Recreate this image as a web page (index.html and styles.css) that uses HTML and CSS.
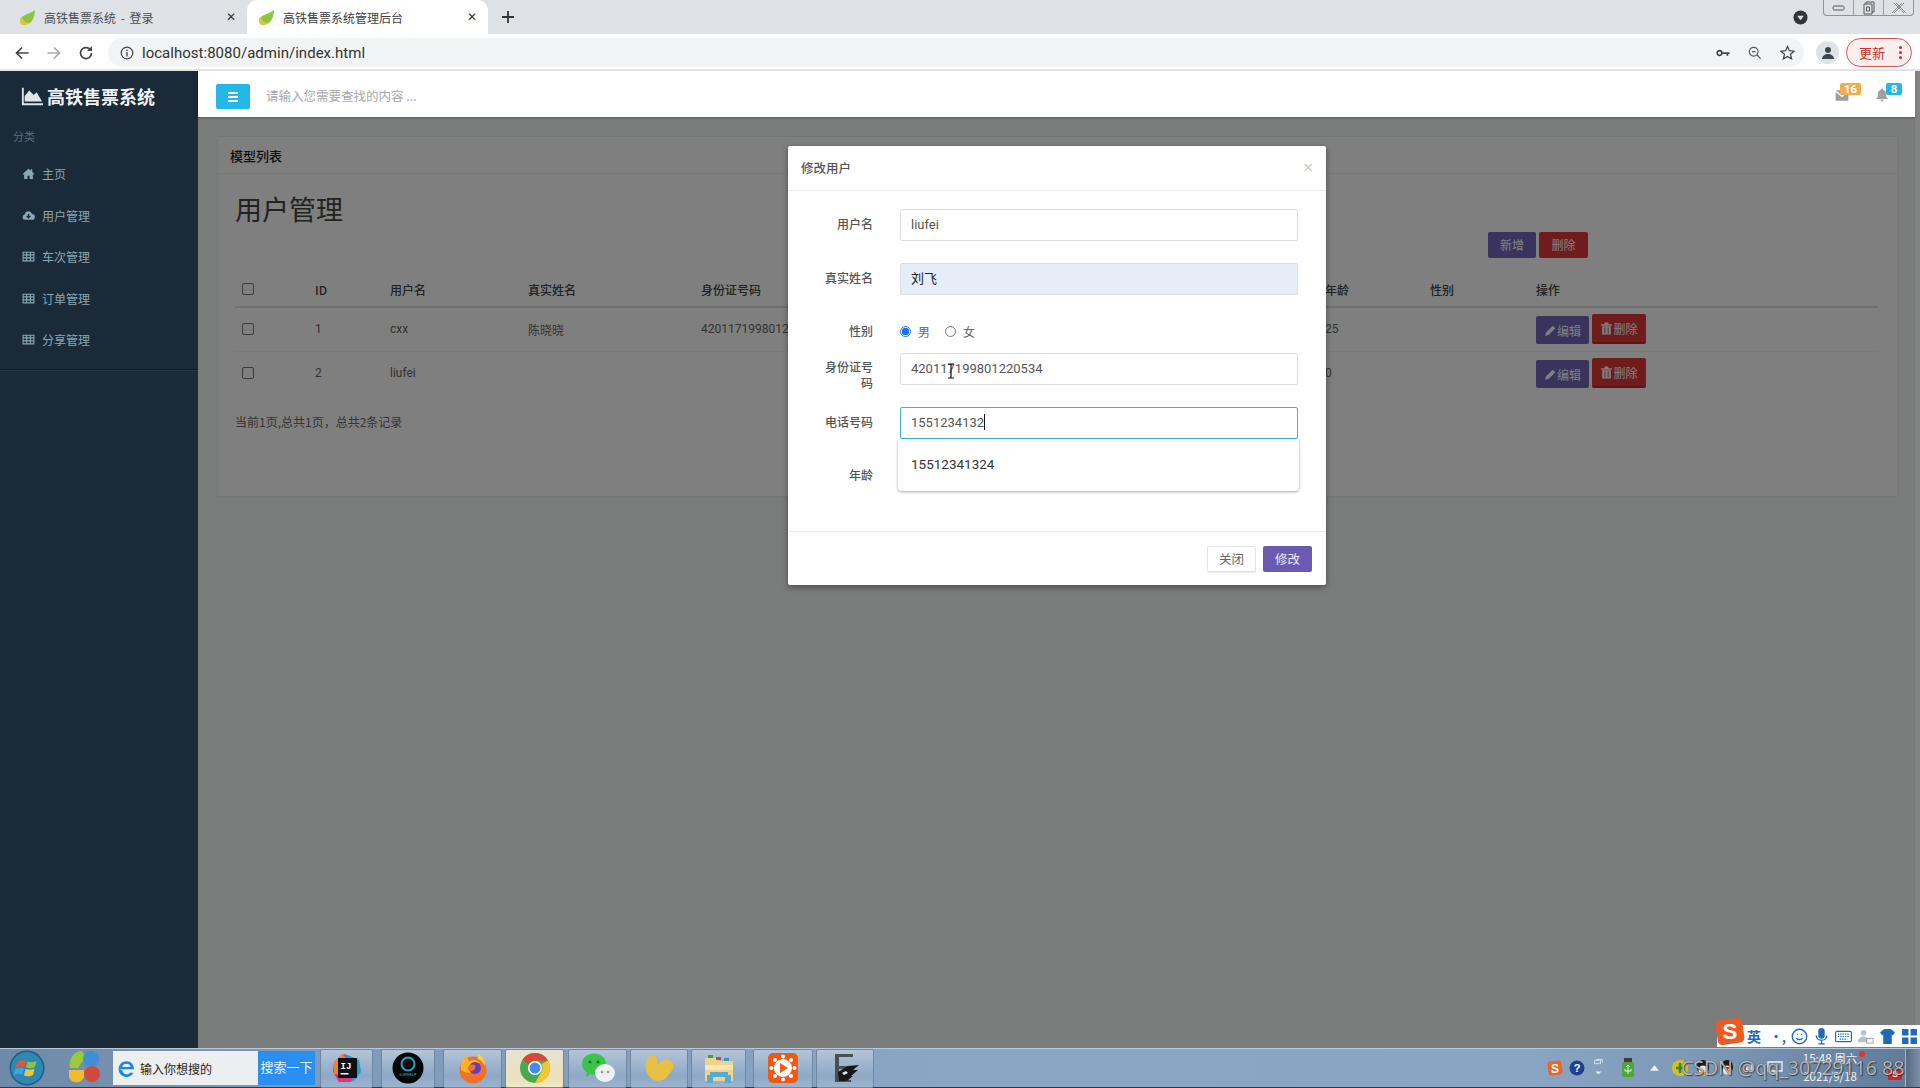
FILE: index.html
```html
<!DOCTYPE html>
<html lang="zh-CN">
<head>
<meta charset="utf-8">
<title>高铁售票系统管理后台</title>
<link rel="stylesheet" href="styles.css">
</head>
<body>
<svg class="defs" aria-hidden="true">
  <symbol id="i-leaf" viewBox="0 0 16 16"><path fill="#8cc63f" d="M15 1C15 9 11 15 5 15 2 15 1 13 1 11 1 6 8 6 15 1z"/><path fill="#e3c53a" d="M1 11c0 2 1 4 4 4 2 0 4-1 5-2C7 13 4 12 3 8 2 9 1 10 1 11z"/></symbol>
  <symbol id="i-home" viewBox="0 0 24 24"><path fill="currentColor" d="M12 3 1 13l1.500 1.500L4 13.300V22h6v-6h4v6h6v-8.700l1.500 1.200L23 13l-4-3.600V4h-3v2.700z"/></symbol>
  <symbol id="i-cloud" viewBox="0 0 24 24"><path fill="currentColor" d="M6 20a5 5 0 0 1-1-9.900A7 7 0 0 1 18.500 9 5.500 5.500 0 0 1 18 20z"/><path fill="#1a2a38" d="M10.500 9h3v4h3L12 18l-4.500-5h3z"/></symbol>
  <symbol id="i-table" viewBox="0 0 24 24"><path fill="none" stroke="currentColor" stroke-width="2" d="M2 4h20v16H2zM2 9h20M2 14.500h20M8.500 4v16M15.500 4v16"/></symbol>
  <symbol id="i-area" viewBox="0 0 24 24"><path fill="currentColor" d="M1 3h2v17h21v2H1z"/><path fill="currentColor" d="M4 18V12l5-6 5 5 3-3 6 10z"/></symbol>
  <symbol id="i-mail" viewBox="0 0 24 24"><path fill="currentColor" d="M1 4h22L12 13zM1 7v15h22V7L12 16z"/></symbol>
  <symbol id="i-bell" viewBox="0 0 24 24"><path fill="currentColor" d="M12 1a2 2 0 0 1 2 2c4 1 5 4 5 8 0 4 1 5 3 7v1H2v-1c2-2 3-3 3-7 0-4 1-7 5-8a2 2 0 0 1 2-2zM9 20h6a3 3 0 0 1-6 0z"/></symbol>
  <symbol id="i-pencil" viewBox="0 0 24 24"><path fill="currentColor" d="M2 22l2-7L16 3l5 5L9 20z"/></symbol>
  <symbol id="i-trash" viewBox="0 0 24 24"><path fill="currentColor" d="M9 1h6l1 3h6v3H2V4h6zM4 8h16v15H4z"/><path stroke="#a52d2d" stroke-width="1.500" d="M9 10v11M15 10v11"/></symbol>
</svg>

<div class="screen">
  <div class="tabstrip">
    <div class="tab">
      <svg class="favicon"><use href="#i-leaf"/></svg>
      <span class="tab-title">高铁售票系统 - 登录</span>
      <span class="tab-x">✕</span>
    </div>
    <div class="tab tab-active">
      <svg class="favicon"><use href="#i-leaf"/></svg>
      <span class="tab-title">高铁售票系统管理后台</span>
      <span class="tab-x">✕</span>
    </div>
    <svg class="tab-plus" viewBox="0 0 14 14"><path d="M7 1v12M1 7h12" stroke="#333" stroke-width="1.800"/></svg>
    <svg class="tab-menu" viewBox="0 0 16 16"><circle cx="8" cy="8" r="7.500" fill="#30343a"/><path d="M4.500 6h7L8 11z" fill="#dee1e6"/></svg>
    <div class="winctl">
      <span class="winbtn"><svg viewBox="0 0 14 10" width="14" height="10"><rect x="1" y="3" width="11" height="4" rx="1.500" fill="none" stroke="#555"/></svg></span>
      <span class="winbtn"><svg viewBox="0 0 14 14" width="14" height="14"><path d="M4 3V1h8v10h-2M2 3h8v10H2zM4.500 6h3v4h-3z" fill="none" stroke="#555"/></svg></span>
      <span class="winbtn winbtn-x"><svg viewBox="0 0 14 12" width="14" height="12"><path d="M2 1l10 10M12 1L2 11M4 1l10 10M10 1L0 11" fill="none" stroke="#777" stroke-width=".8"/></svg></span>
    </div>
  </div>

  <div class="toolbar">
    <svg class="nav-ico" viewBox="0 0 16 16"><path d="M14.500 8H2.500M8 2.500 2.500 8 8 13.500" fill="none" stroke="#444" stroke-width="1.700"/></svg>
    <svg class="nav-ico nav-fwd" viewBox="0 0 16 16"><path d="M1.500 8h12M8 2.500 13.500 8 8 13.500" fill="none" stroke="#a8a8a8" stroke-width="1.700"/></svg>
    <svg class="nav-ico nav-rel" viewBox="0 0 16 16"><path d="M13.500 8A5.500 5.500 0 1 1 11.500 3.800" fill="none" stroke="#444" stroke-width="1.700"/><path d="M14 1v5H9z" fill="#444"/></svg>
    <div class="omnibox">
      <svg class="info-ico" viewBox="0 0 14 14"><circle cx="7" cy="7" r="5.800" fill="none" stroke="#444" stroke-width="1.200"/><path d="M7 6v4.500M7 3.500v1.500" stroke="#444" stroke-width="1.300"/></svg>
      <span class="url">localhost:8080/admin/index.html</span>
      <svg class="omni-ico omni-key" viewBox="0 0 16 10"><circle cx="4" cy="5" r="2.700" fill="none" stroke="#444" stroke-width="1.800"/><path d="M7 4h8.500v2H14v2h-2V6H7z" fill="#444"/></svg>
      <svg class="omni-ico" viewBox="0 0 16 16"><circle cx="6.500" cy="6.500" r="5" fill="none" stroke="#555" stroke-width="1.300"/><path d="M4.500 6.500h4M10 10l4.500 4.500" stroke="#555" stroke-width="1.300"/></svg>
      <svg class="omni-ico omni-star" viewBox="0 0 16 16"><path d="M8 1.500l2 4.600 5 .5-3.800 3.300 1.200 4.900L8 12.200l-4.400 2.600 1.200-4.900L1 6.600l5-.5z" fill="none" stroke="#444" stroke-width="1.300"/></svg>
    </div>
    <span class="avatar"><svg viewBox="0 0 16 16" width="16" height="16"><circle cx="8" cy="5" r="3" fill="#3c4650"/><path d="M2 14c0-3 3-5 6-5s6 2 6 5z" fill="#3c4650"/></svg></span>
    <span class="update"><span class="update-label">更新</span><span class="update-dots"><i></i><i></i><i></i></span></span>
  </div>

  <div class="app">
    <aside class="sidebar">
      <div class="brand"><svg class="brand-ico"><use href="#i-area"/></svg><span>高铁售票系统</span></div>
      <div class="side-cat">分类</div>
      <nav class="side-nav">
        <a class="side-item"><svg class="side-ico"><use href="#i-home"/></svg><span>主页</span></a>
        <a class="side-item"><svg class="side-ico"><use href="#i-cloud"/></svg><span>用户管理</span></a>
        <a class="side-item"><svg class="side-ico"><use href="#i-table"/></svg><span>车次管理</span></a>
        <a class="side-item"><svg class="side-ico"><use href="#i-table"/></svg><span>订单管理</span></a>
        <a class="side-item"><svg class="side-ico"><use href="#i-table"/></svg><span>分享管理</span></a>
      </nav>
    </aside>

    <div class="content">
      <header class="topbar">
        <button class="toggle"><svg viewBox="0 0 12 12" width="12" height="12"><path d="M1 2h10M1 6h10M1 10h10" stroke="#fff" stroke-width="2"/></svg></button>
        <span class="search-ph">请输入您需要查找的内容 ...</span>
        <div class="top-icons">
          <span class="top-icon"><svg class="top-svg"><use href="#i-mail"/></svg><b class="badge badge-o">16</b></span>
          <span class="top-icon top-bell"><svg class="top-svg"><use href="#i-bell"/></svg><b class="badge badge-b">8</b></span>
        </div>
      </header>

      <main class="main">
        <section class="card">
          <div class="card-head">模型列表</div>
          <div class="card-body">
            <h1 class="page-title">用户管理</h1>
            <div class="tools">
              <button class="btn btn-purple">新增</button>
              <button class="btn btn-red">删除</button>
            </div>
            <table class="grid">
              <colgroup><col class="c1"><col class="c2"><col class="c3"><col class="c4"><col class="c5"><col class="c6"><col class="c7"><col class="c8"><col class="c9"></colgroup>
              <thead>
                <tr><th><span class="check"></span></th><th>ID</th><th>用户名</th><th>真实姓名</th><th>身份证号码</th><th>电话号码</th><th>年龄</th><th>性别</th><th>操作</th></tr>
              </thead>
              <tbody>
                <tr><td><span class="check"></span></td><td>1</td><td>cxx</td><td>陈晓晓</td><td>420117199801220534</td><td></td><td>25</td><td></td>
                  <td><div class="ops"><button class="op op-edit"><svg class="op-ico"><use href="#i-pencil"/></svg>编辑</button><button class="op op-del"><svg class="op-ico"><use href="#i-trash"/></svg>删除</button></div></td></tr>
                <tr><td><span class="check"></span></td><td>2</td><td>liufei</td><td></td><td></td><td></td><td>0</td><td></td>
                  <td><div class="ops"><button class="op op-edit"><svg class="op-ico"><use href="#i-pencil"/></svg>编辑</button><button class="op op-del"><svg class="op-ico"><use href="#i-trash"/></svg>删除</button></div></td></tr>
              </tbody>
            </table>
            <p class="pager">当前1页,总共1页，总共2条记录</p>
          </div>
        </section>

        <div class="backdrop"></div>

        <div class="modal">
          <div class="modal-head"><span class="modal-title">修改用户</span><span class="modal-x">×</span></div>
          <form class="modal-body">
            <div class="row row-a"><label>用户名</label><div class="field">liufei</div></div>
            <div class="row row-b"><label>真实姓名</label><div class="field field-fill">刘飞</div></div>
            <div class="row row-c"><label>性别</label>
              <div class="radios"><span class="radio radio-on"></span><span class="radio-text">男</span><span class="radio"></span><span class="radio-text">女</span></div>
            </div>
            <div class="row row-d"><label class="label-wrap">身份证号码</label><div class="field">420117199801220534<svg class="ibeam" viewBox="0 0 8 16"><path d="M1 1h6M4 1v14M1 15h6" stroke="#111" stroke-width="1.200" fill="none"/></svg></div></div>
            <div class="row row-e"><label>电话号码</label><div class="field field-focus">1551234132<i class="caret"></i></div></div>
            <div class="row row-f"><label>年龄</label></div>
            <div class="suggest">15512341324</div>
          </form>
          <div class="modal-foot">
            <button class="mbtn mbtn-close">关闭</button>
            <button class="mbtn mbtn-ok">修改</button>
          </div>
        </div>
      </main>
    </div>
    <div class="scrollbar"></div>
  </div>

  <footer class="taskbar">
    <svg class="orb" viewBox="0 0 36 36">
      <circle cx="18" cy="18" r="17.500" fill="#1d5d86"/><circle cx="18" cy="18" r="16" fill="#2e88b5"/>
      <path d="M8 12c3-2 6-2 9-1l-1.500 6c-3-1-6-1-9 1z" fill="#e8552c"/><path d="M18.500 11.500c3 1 6 1 9-.5l-1.500 6c-3 1.500-6 1.500-9 .5z" fill="#8cc63f"/>
      <path d="M6 19.500c3-2 6-2 9-1l-1.500 6c-3-1-6-1-9 1z" fill="#3aa4e0"/><path d="M16.500 19c3 1 6 1 9-.5L24 25c-3 1.500-6 1.500-9 .5z" fill="#f8c13a"/>
    </svg>
    <svg class="apps" viewBox="0 0 32 36">
      <path d="M13 1a7 7 0 0 1 3 8c-2 4-5 6-6 9H2C0 10 6 1 13 1z" fill="#9ac93a"/><circle cx="23" cy="9" r="8" fill="#3f8fd6"/><circle cx="24" cy="24" r="8" fill="#d2483c"/><path d="M1 20h15v7a8 8 0 0 1-15 0z" fill="#f0bb2c"/>
    </svg>
    <div class="websearch">
      <div class="ws-input">
        <svg class="ie" viewBox="0 0 20 20"><path d="M3 10.800h14c.4-4.500-2.800-7.800-7-7.800-4.300 0-7.500 3.200-7.500 7.500S5.700 18 10 18c3 0 5.500-1.500 6.700-4h-3.600c-.7 1-1.800 1.500-3.100 1.500-2 0-3.600-1.500-4-3.700zM6 8.500C6.400 6.500 8 5.400 10 5.400s3.500 1.100 3.900 3.100z" fill="#1b87e0" fill-rule="evenodd"/></svg>
        <span>输入你想搜的</span>
      </div>
      <div class="ws-btn">搜索一下</div>
    </div>
    <div class="tasks">
      <div class="task t-idea"><svg viewBox="0 0 32 32" class="task-svg"><path d="M3 10 13 2l10 4 7 12-10 12H8L2 20z" fill="#e5317e"/><path d="M14 2l14 6 2 12-8 10z" fill="#1a9fe0"/><path d="M3 10l8-8 6 6-8 14H3z" fill="#f58220"/><rect x="7" y="6" width="19" height="20" fill="#111"/><text x="9.500" y="16.500" class="ij">IJ</text><rect x="9.500" y="21" width="8" height="1.500" fill="#fff"/></svg></div>
      <div class="task t-sup"><svg viewBox="0 0 32 32" class="task-svg"><circle cx="16" cy="16" r="15.500" fill="#060606"/><circle cx="16" cy="12" r="6.500" fill="none" stroke="#22a6c9" stroke-width="2"/><text x="16" y="24" class="sup">SUPHELP</text></svg></div>
      <div class="task t-fox"><svg viewBox="0 0 32 32" class="task-svg"><circle cx="16" cy="18" r="13.500" fill="#f4702a"/><path d="M4 18C3 10 7 5 11 3c-1 3 0 5 1 6 4-2 9-1 11 2-3-1-7 0-8 3 0 3 3 5 6 4-4 5-13 3-17 0z" fill="#ffb224"/><circle cx="18" cy="16" r="6" fill="#6a3bc0"/><path d="M11 15c2-3 5-3 7-2 1 3 0 5-3 6-3 0-5-2-4-4z" fill="#f4702a"/><path d="M22 2c3 3 6 7 6 13-1-4-4-7-7-8 0-2 0-4 1-5z" fill="#ffd23a"/></svg></div>
      <div class="task t-chrome"><svg viewBox="0 0 32 32" class="task-svg"><circle cx="16" cy="16" r="15" fill="#4aa84f"/><path d="M16 1a15 15 0 0 1 13 7.500H16a7.500 7.500 0 0 0-6.500 3.800L3.500 7.500A15 15 0 0 1 16 1z" fill="#dc4537"/><path d="M29 8.500A15 15 0 0 1 16 31l6.500-11.300A7.500 7.500 0 0 0 22.500 12z" fill="#f7c62f"/><circle cx="16" cy="16" r="7" fill="#fff"/><circle cx="16" cy="16" r="5.500" fill="#4688f0"/></svg></div>
      <div class="task t-wx"><svg viewBox="0 0 36 32" class="task-svg task-wide"><ellipse cx="14" cy="12" rx="12" ry="10.500" fill="#3bc44a"/><path d="M7 19l-1 6 6-4z" fill="#3bc44a"/><circle cx="10" cy="10" r="1.500" fill="#17702a"/><circle cx="18" cy="10" r="1.500" fill="#17702a"/><ellipse cx="25" cy="21" rx="10" ry="9" fill="#eef1f2"/><circle cx="22" cy="20" r="1.300" fill="#999"/><circle cx="28" cy="20" r="1.300" fill="#999"/></svg></div>
      <div class="task t-duck"><svg viewBox="0 0 36 32" class="task-svg task-wide"><path d="M5 18C3 8 9 2 14 4c2 1 3 6 2 10 3-5 9-8 14-5 3 2 3 7 0 11-4 5-7 9-13 9-6 0-10-5-12-11z" fill="#e8c044"/></svg></div>
      <div class="task t-folder"><svg viewBox="0 0 32 32" class="task-svg"><path d="M2 6h12l2 3h14v20H2z" fill="#ecd58a"/><rect x="5" y="3" width="5" height="3" fill="#3fa14a"/><rect x="13" y="5" width="5" height="3" fill="#c84a3a"/><rect x="21" y="6" width="5" height="3" fill="#3c8fd0"/><path d="M2 13h28v5H2z" fill="#f6e8b6"/><path d="M7 20h18v3h3v8h-6v-6H10v6H4v-8h3z" fill="#57a9d8"/></svg></div>
      <div class="task t-video"><svg viewBox="0 0 32 32" class="task-svg"><rect x="1" y="1" width="30" height="30" rx="5" fill="#ee5a15"/><circle cx="16" cy="16" r="9" fill="#fff"/><g fill="#fff"><circle cx="16" cy="4.500" r="2"/><circle cx="16" cy="27.500" r="2"/><circle cx="4.500" cy="16" r="2"/><circle cx="27.500" cy="16" r="2"/><circle cx="8" cy="8" r="2"/><circle cx="24" cy="8" r="2"/><circle cx="8" cy="24" r="2"/><circle cx="24" cy="24" r="2"/></g><path d="M13 11l8 5-8 5z" fill="#ee5a15"/></svg></div>
      <div class="task t-ed"><svg viewBox="0 0 32 32" class="task-svg"><path d="M6 2h18v3H10v9h10v3H10v11h12v2H6z" fill="#4a4f54"/><path d="M9 20l10-6 11-1-6 5 5 0-7 6 2 0-6 5H10z" fill="#181818"/><path d="M13 21l4-2 2 2-4 2z" fill="#e8e8e8"/></svg></div>
    </div>
    <div class="tray">
      <svg class="tray-i tray-s" viewBox="0 0 16 16"><rect x="1" y="1" width="14" height="14" rx="3" fill="#e8662a" transform="rotate(-8 8 8)"/><text x="8" y="12.500" class="sg">S</text></svg>
      <svg class="tray-i tray-help" viewBox="0 0 16 16"><circle cx="8" cy="8" r="7.500" fill="#23408f"/><text x="8" y="12" class="qm">?</text></svg>
      <svg class="tray-i tray-sw" viewBox="0 0 14 22"><path d="M3 2h7v4H3zM5 1h7v4" fill="none" stroke="#e4e8ee"/><path d="M4 15h7l-3.500 3.500z" fill="#e4e8ee"/></svg>
      <svg class="tray-i tray-usb" viewBox="0 0 14 20"><rect x="3" y="0" width="8" height="5" fill="#3a3f3a"/><rect x="1" y="4" width="12" height="15" rx="2" fill="#4aa83a"/><path d="M7 7v9M5 9l2-2 2 2M4 11v2h6v-2" stroke="#e8f4e0" fill="none"/></svg>
      <svg class="tray-i tray-up" viewBox="0 0 10 6"><path d="M5 0l5 6H0z" fill="#eef1f5"/></svg>
      <svg class="tray-i tray-green" viewBox="0 0 18 18"><circle cx="9" cy="9" r="8" fill="#d5c21f"/><path d="M9 4v10M5 9h8" stroke="#2b8a2b" stroke-width="2.500"/></svg>
      <svg class="tray-i tray-qq" viewBox="0 0 16 18"><ellipse cx="8" cy="8" rx="6" ry="7" fill="#1b1b1b"/><ellipse cx="8" cy="11" rx="4.500" ry="4.500" fill="#f0e8d8"/><ellipse cx="8" cy="15" rx="6" ry="2" fill="#e2a32c"/></svg>
      <svg class="tray-i tray-qq tray-qq2" viewBox="0 0 16 18"><ellipse cx="8" cy="8" rx="6" ry="7" fill="#1b1b1b"/><ellipse cx="8" cy="11" rx="4.500" ry="4.500" fill="#f0e8d8"/><path d="M5 8l3 4 3-4" fill="#d8342c"/></svg>
      <svg class="tray-i tray-sp" viewBox="0 0 14 14"><path d="M1 5h3l4-3v10L4 9H1z" fill="#eef1f5"/></svg>
      <svg class="tray-i tray-net" viewBox="0 0 16 14"><path d="M1 1h14v9H1zM5 13h6M8 10v3" fill="none" stroke="#eef1f5" stroke-width="1.300"/></svg>
      <div class="clock"><span>15:48 周六</span><span>2021/9/18</span><i class="clock-dot"></i></div>
      <span class="red-s">S</span>
      <span class="show-desk"></span>
    </div>
    <span class="watermark">CSDN @qq_30729116 88</span>
  </footer>

  <div class="imebar">
    <svg class="ime-logo" viewBox="0 0 28 26"><rect x="2" y="2" width="24" height="22" rx="4" fill="#ea5a22" transform="rotate(-8 14 13)"/><text x="14" y="20" class="sg2">S</text></svg>
    <span class="ime-t">英</span>
    <span class="ime-t ime-p">•,</span>
    <svg class="ime-i" viewBox="0 0 16 16"><circle cx="8" cy="8" r="6.800" fill="none" stroke="#1d6bb8" stroke-width="1.300"/><path d="M5 9.500c1.500 2 4.500 2 6 0M5.500 6h1M9.500 6h1" stroke="#1d6bb8" stroke-width="1.200" fill="none"/></svg>
    <svg class="ime-i" viewBox="0 0 16 16"><rect x="5" y="0" width="6" height="10" rx="3" fill="#1d6bb8"/><path d="M3 7c0 6 10 6 10 0M8 12v3M5 15h6" stroke="#1d6bb8" fill="none" stroke-width="1.200"/></svg>
    <svg class="ime-i" viewBox="0 0 18 14"><rect x=".6" y="1.600" width="16.800" height="10.800" rx="1.500" fill="none" stroke="#1d6bb8" stroke-width="1.200"/><path d="M3 4.500h12M3 7h12M5 9.800h8" stroke="#1d6bb8" stroke-dasharray="1.500 1" stroke-width="1.300"/></svg>
    <svg class="ime-i" viewBox="0 0 18 16"><circle cx="7" cy="4" r="3" fill="#b9c1c9"/><path d="M1 14c0-4 3-6 6-6 2 0 3 1 4 2v4z" fill="#b9c1c9"/><rect x="10" y="10" width="7" height="5" fill="none" stroke="#9aa3ab"/></svg>
    <svg class="ime-i" viewBox="0 0 16 16"><path d="M5 1h6l4 3-2 3-1-1v9H4V6L3 7 1 4z" fill="#1d6bb8"/></svg>
    <svg class="ime-i" viewBox="0 0 16 16"><path d="M1 1h6v6H1zM9 1h6v6H9zM1 9h6v6H1zM9 9h6v6H9z" fill="#1d6bb8"/></svg>
  </div>
</div>
</body>
</html>
```
FILE: styles.css
```css
* { box-sizing: border-box; }
html, body { margin: 0; padding: 0; height: 100%; overflow: hidden; }
body { font-family: "Open Sans", "Noto Sans CJK SC", sans-serif; font-size: 12px; color: #333; background: #fff; }
.defs { position: absolute; width: 0; height: 0; }
button { font-family: inherit; border: 0; padding: 0; margin: 0; }
.screen { position: relative; width: 1920px; height: 1088px; display: flex; flex-direction: column; overflow: hidden; }

/* browser chrome */
.tabstrip { height: 34px; flex: none; background: #dee1e6; display: flex; align-items: flex-start; position: relative; }
.tab { width: 247px; height: 34px; display: flex; align-items: center; padding-left: 19px; font: 12px "Noto Sans CJK SC", sans-serif; color: #4a4d52; }
.tab-active { width: 241px; padding-left: 11px; background: #fff; border-radius: 10px 10px 0 0; color: #3c4043; }
.favicon { width: 17px; height: 17px; flex: none; }
.tab-title { margin-left: 8px; flex: 1; white-space: nowrap; word-spacing: 2px; }
.tab-x { width: 12px; margin-right: 9px; font-size: 12px; color: #333; line-height: 1; font-family: "DejaVu Sans", sans-serif; }
.tab-plus { width: 14px; height: 14px; margin: 10px 0 0 13px; flex: none; }
.tab-menu { width: 15px; height: 15px; margin: 10px 0 0 1278px; flex: none; }
.winctl { margin-left: 15px; width: 91px; height: 16px; display: flex; border: 1px solid #8d949c; border-top: 0; border-radius: 0 0 4px 4px; flex: none; }
.winbtn { flex: 1; display: flex; align-items: center; justify-content: center; border-left: 1px solid #9aa0a8; }
.winbtn:first-child { border-left: 0; }

.toolbar { height: 37px; flex: none; background: #fff; display: flex; align-items: center; padding: 2px 0 0 14px; border-bottom: 2px solid #e3e5e8; }
.nav-ico { width: 16px; height: 16px; flex: none; }
.nav-fwd { margin-left: 16px; }
.nav-rel { margin-left: 16px; }
.omnibox { width: 1696px; height: 29px; margin-left: 14px; background: #f1f3f4; border-radius: 15px; display: flex; align-items: center; padding-left: 12px; flex: none; }
.info-ico { width: 14px; height: 14px; flex: none; }
.url { margin-left: 8px; font: 15px Roboto, sans-serif; color: #333; flex: 1; letter-spacing: .02px; }
.omni-ico { width: 14px; height: 14px; margin-right: 18px; flex: none; }
.omni-key { width: 14px; height: 10px; }
.omni-star { width: 15px; height: 15px; margin-right: 9px; }
.avatar { width: 23px; height: 23px; border-radius: 50%; background: #dfe3e8; margin-left: 12px; display: flex; align-items: center; justify-content: center; flex: none; }
.update { width: 66px; height: 29px; margin-left: 7px; border: 1px solid #d9534f; border-radius: 15px; background: #fbeeee; display: flex; align-items: center; flex: none; padding-left: 12px; color: #c5332a; font: 13px "Noto Sans CJK SC", sans-serif; }
.update-dots { margin-left: 14px; display: flex; flex-direction: column; gap: 2px; }
.update-dots i { display: block; width: 3px; height: 3px; border-radius: 50%; background: #c5332a; }

/* app */
.app { flex: 1; display: flex; min-height: 0; }
.sidebar { width: 198px; flex: none; background: #1a2a38; position: relative; }
.brand { height: 49px; display: flex; align-items: center; padding: 0 0 0 21px; color: #eef3f5; font: bold 18px "Noto Sans CJK SC", sans-serif; }
.brand-ico { width: 22px; height: 22px; margin-right: 4px; color: #dfe6ea; }
.side-cat { margin: 8px 0 0 13px; height: 16px; color: #55707f; font: 11px/16px "Noto Sans CJK SC", sans-serif; }
.side-nav { margin-top: 9px; border-bottom: 1px solid #0f1a24; box-shadow: 0 1px 0 #24364a; height: 217px; }
.side-item { display: flex; align-items: center; height: 41.500px; padding-left: 22px; color: #8ba6b4; font: 12px "Noto Sans CJK SC", sans-serif; }
.side-ico { width: 13px; height: 13px; margin-right: 7px; flex: none; }

.content { flex: 1; display: flex; flex-direction: column; min-width: 0; }
.topbar { height: 46px; flex: none; background: #fff; display: flex; align-items: center; padding-left: 18px; position: relative; z-index: 2; box-shadow: 0 1px 2px rgba(0,0,0,.25); }
.toggle { width: 34px; height: 25px; margin-top: 5px; background: #23b7e5; border-radius: 2px; display: flex; align-items: center; justify-content: center; }
.search-ph { margin: 2px 0 0 16px; color: #a8a8a8; font: 12.500px "Noto Sans CJK SC", sans-serif; flex: 1; }
.top-icons { display: flex; padding-right: 26px; align-items: center; }
.top-icon { position: relative; width: 14px; height: 14px; color: #a0a0a0; margin-top: 1px; display: block; }
.top-bell { margin-left: 26px; }
.top-svg { width: 14px; height: 14px; display: block; }
.badge { position: absolute; top: -5px; height: 12px; text-align: center; font: bold 11.500px/12px Roboto, sans-serif; color: #fff; border-radius: 2px; }
.badge-o { left: 5px; width: 21px; background: #f0ad4e; }
.badge-b { left: 11px; width: 16px; background: #23b7e5; }

.main { flex: 1; position: relative; background: #f5f8f8; padding: 20px 18px 0 20px; overflow: hidden; }
.card { background: #fff; box-shadow: 0 0 2px rgba(0,0,0,.12); padding-bottom: 65px; }
.card-head { height: 37px; padding-left: 12px; font: 500 13px/37px "Noto Sans CJK SC", sans-serif; color: #222; border-bottom: 1px solid #eef1f1; }
.card-body { padding: 0 19px 0 17px; }
.page-title { margin: 17px 0 0; font: 400 27px/36px "Noto Sans CJK SC", sans-serif; color: #444; }
.tools { margin-top: 5px; height: 26px; display: flex; justify-content: flex-end; gap: 3px; padding-right: 290px; }
.btn { height: 26px; padding-bottom: 2px; border-radius: 2px; font: 12px "Noto Sans CJK SC", sans-serif; color: #fff; }
.btn-purple { width: 48px; background: #7266ba; }
.btn-red { width: 49px; background: #e0393a; }

.grid { width: 1643px; table-layout: fixed; border-collapse: collapse; margin-top: 12px; font: 12px "Noto Sans CJK SC", Roboto, sans-serif; color: #666; }
.grid .c1 { width: 73px; } .grid .c2 { width: 75px; } .grid .c3 { width: 138px; } .grid .c4 { width: 173px; }
.grid .c5 { width: 166px; } .grid .c6 { width: 458px; } .grid .c7 { width: 105px; } .grid .c8 { width: 106px; } .grid .c9 { width: 349px; }
.grid th { height: 37px; padding: 2px 0 0 7px; text-align: left; font-weight: 500; color: #444; border-bottom: 2px solid #dfe3e3; }
.grid td { height: 44px; padding: 0 0 0 7px; border-bottom: 1px solid #f2f4f4; white-space: nowrap; font-family: Roboto, "Noto Sans CJK SC", sans-serif; }
.grid tbody tr:last-child td { border-bottom: 0; }
.check { display: block; width: 12px; height: 12px; border: 1px solid #777; border-radius: 2px; background: #fff; }
.ops { display: flex; align-items: flex-end; gap: 3px; }
.op { height: 28px; display: flex; align-items: center; justify-content: center; color: #fff; border-radius: 2px; font: 12px "Noto Sans CJK SC", sans-serif; }
.op-edit { width: 53px; background: #7266ba; }
.op-del { width: 54px; height: 30px; background: #e0393a; border-bottom: 2px solid #b92c2c; }
.op-ico { width: 13px; height: 13px; flex: none; }
.pager { margin: 18px 0 0; font: 12px/18px "Noto Sans CJK SC", sans-serif; color: #6a6a6a; }

.backdrop { position: absolute; inset: 0; background: rgba(0,0,0,.5); }
.modal { position: absolute; left: 590px; top: 29px; width: 538px; height: 439px; background: #fff; border-radius: 2px; box-shadow: 0 2px 6px rgba(0,0,0,.4); display: flex; flex-direction: column; font-family: "Noto Sans CJK SC", sans-serif; }
.modal-head { height: 45px; flex: none; display: flex; align-items: center; justify-content: space-between; padding: 0 12px 2px 13px; border-bottom: 1px solid #e8ecec; }
.modal-title { font: 500 12.500px "Noto Sans CJK SC", sans-serif; color: #555; }
.modal-x { font: 14px "DejaVu Sans", sans-serif; color: #c5c5c5; }
.modal-body { flex: 1; position: relative; padding-top: 18px; }
.row { display: flex; align-items: center; height: 32px; }
.row label { width: 85px; padding-bottom: 2px; text-align: right; font: 500 12px/16px "Noto Sans CJK SC", sans-serif; color: #555; flex: none; }
.row-b { margin-top: 22px; }
.row-c { margin-top: 21px; }
.row-d { margin-top: 5px; align-items: flex-start; }
.row-d .label-wrap { margin-top: 6px; padding: 0 0 0 36px; }
.row-e { margin-top: 22px; }
.row-f { margin-top: 21px; }
.field { position: relative; width: 398px; height: 32px; margin-left: 27px; border: 1px solid #dbe0e0; border-radius: 2px; padding-left: 10px; font: 13px/30px Roboto, "Noto Sans CJK SC", sans-serif; color: #555; background: #fff; }
.field-fill { background: #e5edf9; color: #222; }
.field-focus { border-color: #3fb5d6; }
.caret { display: inline-block; width: 1px; height: 16px; background: #111; vertical-align: -3px; }
.ibeam { position: absolute; left: 46px; top: 9px; width: 8px; height: 16px; }
.radios { margin: 0 0 2px 27px; display: flex; align-items: center; font: 12px "Noto Sans CJK SC", sans-serif; color: #666; }
.radio { width: 11px; height: 11px; border-radius: 50%; border: 1px solid #767676; background: #fff; display: block; }
.radio-on { border: 1px solid #1a73e8; background: radial-gradient(circle, #1a73e8 0 3.500px, #fff 4px); }
.radio-text { margin: 0 15px 0 7px; }
.suggest { position: absolute; left: 110px; top: 248px; width: 401px; height: 52px; background: #fff; border-radius: 0 0 4px 4px; box-shadow: 0 1px 3px rgba(0,0,0,.35); padding-left: 13px; font: 13.500px/50px Roboto, sans-serif; color: #333; }
.modal-foot { height: 54px; flex: none; border-top: 1px solid #eceeee; display: flex; justify-content: flex-end; align-items: flex-start; padding: 14px 14px 0 0; gap: 7px; }
.mbtn { width: 49px; height: 26px; padding-bottom: 2px; border-radius: 2px; font: 12.500px "Noto Sans CJK SC", sans-serif; }
.mbtn-close { background: #fff; border: 1px solid #e2e5e5; box-shadow: 0 1px 1px rgba(0,0,0,.08); color: #666; }
.mbtn-ok { background: #6a5bb0; color: #e8e8f8; }

.scrollbar { width: 5px; flex: none; background: #838383; }

/* taskbar */
.taskbar { position: relative; height: 40px; flex: none; display: flex; align-items: center; padding-left: 9px; background: linear-gradient(90deg, #6f8aa8 0, #7f9ab9 15%, #8ba6c5 50%, #8aa5c4 80%, #7b96b5 90%, #5f7a99 100%); border-top: 1px solid #b9c8da; border-bottom: 1px solid #2c3b4c; }
.orb { width: 36px; height: 36px; flex: none; }
.apps { width: 32px; height: 36px; margin-left: 23px; flex: none; }
.websearch { width: 202px; height: 34px; margin-left: 13px; display: flex; flex: none; }
.ws-input { width: 145px; background: #eceef0; display: flex; align-items: center; padding-left: 3px; font: 12px "Noto Sans CJK SC", sans-serif; color: #222; }
.ie { width: 21px; height: 21px; margin-right: 3px; flex: none; }
.ws-btn { flex: 1; padding-bottom: 2px; background: #2b8ff0; color: #e6f1ff; font: 13px/32px "Noto Sans CJK SC", sans-serif; text-align: center; }
.tasks { display: flex; margin-left: 5px; height: 39px; flex: none; }
.task { width: 54px; height: 39px; display: flex; align-items: center; justify-content: center; border: 1px solid #6f87a3; border-radius: 2px; background: linear-gradient(180deg, #b3c5d9, #8ea8c5 70%, #9cb4cf); flex: none; }
.t-idea { width: 53px; }
.t-sup { margin-left: 8px; }
.t-fox { width: 59px; margin-left: 8px; }
.t-chrome { width: 59px; margin-left: 3px; background: linear-gradient(180deg, #e6e2d2, #ece1ba 80%, #f0e8c8); }
.t-wx { width: 59px; margin-left: 4px; }
.t-duck { width: 58px; margin-left: 3px; }
.t-folder { width: 55px; margin-left: 3px; }
.t-video { width: 60px; margin-left: 7px; }
.t-ed { width: 58px; margin-left: 3px; }
.task-svg { width: 32px; height: 32px; }
.task-wide { width: 38px; }
.ij { font: bold 9px "Liberation Mono", monospace; fill: #fff; }
.sup { font: 4px Roboto, sans-serif; fill: #2fb6c8; text-anchor: middle; }
.tray { margin-left: auto; display: flex; align-items: center; height: 100%; flex: none; }
.tray-i { width: 16px; height: 16px; flex: none; }
.tray-s { margin-right: 6px; }
.tray-help { margin-right: 7px; }
.tray-sw { width: 12px; height: 20px; margin-right: 17px; }
.tray-usb { width: 14px; height: 20px; margin-right: 15px; }
.tray-up { width: 9px; height: 6px; margin-right: 12px; }
.tray-green { width: 18px; height: 18px; margin-right: 6px; }
.tray-qq { width: 16px; height: 18px; margin-right: 8px; }
.tray-qq2 { margin-right: 10px; }
.tray-sp { width: 14px; height: 14px; margin-right: 8px; }
.tray-net { width: 16px; height: 14px; margin-right: 17px; }
.sg { font: bold 12px "Liberation Sans", sans-serif; fill: #fff; text-anchor: middle; }
.qm { font: bold 11px "Liberation Sans", sans-serif; fill: #fff; text-anchor: middle; }
.clock { position: relative; width: 60px; padding-bottom: 2px; display: flex; flex-direction: column; align-items: center; color: #eef1f5; font: 11.500px/18px "Noto Sans CJK SC", sans-serif; white-space: nowrap; }
.clock-dot { position: absolute; right: -5px; top: 2px; width: 6px; height: 6px; border-radius: 50%; background: #e8332a; }
.red-s { width: 14px; height: 11px; margin: 12px 3px 0 28px; background: #d3232a; color: #fff; font: bold 9px/11px "Liberation Sans", sans-serif; text-align: center; }
.show-desk { width: 15px; height: 100%; background: linear-gradient(90deg, #566c84, #7b8fa6); border-left: 1px solid #a6b4c4; }
.watermark { position: absolute; left: 1681px; top: 5px; font: 19.500px/28px "Open Sans", sans-serif; color: rgba(240,240,240,.72); text-shadow: 0 0 1px #222, 1px 1px 1px rgba(20,20,20,.6); white-space: nowrap; }

/* IME bar */
.imebar { position: absolute; left: 1717px; top: 1025px; width: 203px; height: 22px; background: #fff; display: flex; align-items: center; padding-left: 30px; color: #1d6bb8; }
.ime-logo { position: absolute; left: -3px; top: -8px; width: 32px; height: 29px; }
.sg2 { font: bold 20px "Liberation Sans", sans-serif; fill: #fff; text-anchor: middle; }
.ime-t { width: 16px; font: bold 14px "Noto Sans CJK SC", sans-serif; flex: none; margin-right: 7px; }
.ime-p { font-size: 12px; margin-right: 5px; }
.ime-i { width: 17px; height: 17px; margin-right: 5px; flex: none; }
```
